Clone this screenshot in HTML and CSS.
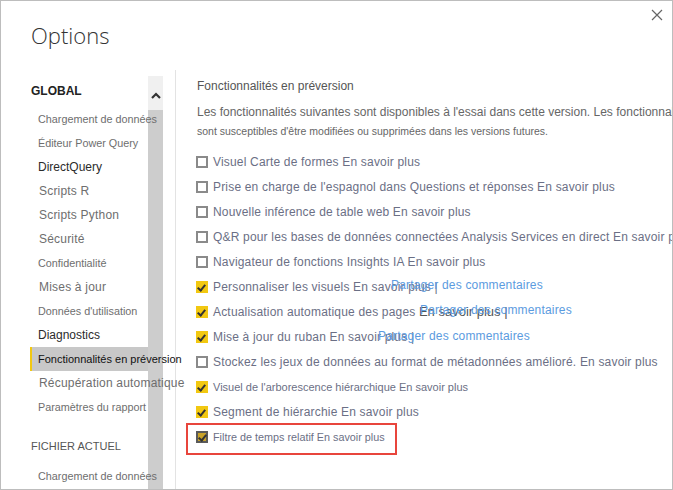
FILE: index.html
```html
<!DOCTYPE html>
<html lang="fr">
<head>
<meta charset="utf-8">
<title>Options</title>
<link rel="stylesheet" href="styles.css">
</head>
<body>
<div class="window">
  <button class="close" aria-label="Fermer">
    <svg width="12" height="12" viewBox="0 0 12 12"><path d="M1 1 L11 11 M11 1 L1 11" stroke="#666" stroke-width="1.2" fill="none"/></svg>
  </button>
  <h1 class="title">Options</h1>
  <div class="main">
    <nav class="nav">
      <div class="nav-list">
        <div class="nav-head">GLOBAL</div>
        <div class="nav-item s11">Chargement de données</div>
        <div class="nav-item s11">Éditeur Power Query</div>
        <div class="nav-item dark">DirectQuery</div>
        <div class="nav-item s12">Scripts R</div>
        <div class="nav-item s12">Scripts Python</div>
        <div class="nav-item s12">Sécurité</div>
        <div class="nav-item s11">Confidentialité</div>
        <div class="nav-item s12">Mises à jour</div>
        <div class="nav-item s11">Données d'utilisation</div>
        <div class="nav-item dark">Diagnostics</div>
        <div class="nav-item selected">Fonctionnalités en préversion</div>
        <div class="nav-item s12">Récupération automatique</div>
        <div class="nav-item s11">Paramètres du rapport</div>
        <div class="nav-head2">FICHIER ACTUEL</div>
        <div class="nav-item s11">Chargement de données</div>
      </div>
      <div class="scrollbar">
        <div class="scroll-up">
          <svg width="10" height="7" viewBox="0 0 10 7"><path d="M1 6 L5 2 L9 6" stroke="#333" stroke-width="2.2" fill="none"/></svg>
        </div>
        <div class="scroll-thumb"></div>
      </div>
    </nav>
    <section class="content">
      <h2 class="sec-title">Fonctionnalités en préversion</h2>
      <p class="desc1">Les fonctionnalités suivantes sont disponibles à l'essai dans cette version. Les fonctionnalités en préversion</p>
      <p class="desc2">sont susceptibles d'être modifiées ou supprimées dans les versions futures.</p>
      <ul class="opts">
        <li class="opt"><span class="cb"></span><span class="lbl">Visuel Carte de formes En savoir plus</span></li>
        <li class="opt"><span class="cb"></span><span class="lbl">Prise en charge de l'espagnol dans Questions et réponses En savoir plus</span></li>
        <li class="opt"><span class="cb"></span><span class="lbl">Nouvelle inférence de table web En savoir plus</span></li>
        <li class="opt"><span class="cb"></span><span class="lbl">Q&amp;R pour les bases de données connectées Analysis Services en direct En savoir plus</span></li>
        <li class="opt"><span class="cb"></span><span class="lbl">Navigateur de fonctions Insights IA En savoir plus</span></li>
        <li class="opt"><span class="cb on"></span><span class="lbl">Personnaliser les visuels En savoir plus |</span><span class="share s1">Partager des commentaires</span></li>
        <li class="opt"><span class="cb on"></span><span class="lbl">Actualisation automatique des pages <span class="big">En savoir plus |</span></span><span class="share s2">Partager des commentaires</span></li>
        <li class="opt"><span class="cb on"></span><span class="lbl">Mise à jour du ruban En savoir plus |</span><span class="share s3">Partager des commentaires</span></li>
        <li class="opt"><span class="cb"></span><span class="lbl">Stockez les jeux de données au format de métadonnées amélioré. En savoir plus</span></li>
        <li class="opt"><span class="cb on"></span><span class="lbl small">Visuel de l'arborescence hiérarchique En savoir plus</span></li>
        <li class="opt"><span class="cb on"></span><span class="lbl">Segment de hiérarchie En savoir plus</span></li>
        <li class="opt hl"><span class="cb on dim"></span><span class="lbl small tiny">Filtre de temps relatif En savoir plus</span></li>
      </ul>
    </section>
  </div>
</div>
</body>
</html>
```
FILE: styles.css
```css
* { box-sizing: border-box; }
html, body { margin: 0; padding: 0; background: #fff; }
body { font-family: "Liberation Sans", Arial, sans-serif; }

.window {
  position: relative;
  width: 673px;
  height: 490px;
  border: 1px solid #bdbdbd;
  background: #fff;
  overflow: hidden;
}

.close {
  position: absolute;
  top: 8px;
  right: 9px;
  width: 12px;
  height: 12px;
  padding: 0;
  border: 0;
  background: transparent;
  display: flex;
}

.title {
  margin: 0;
  padding: 18px 0 0 30px;
  height: 69px;
  font-family: "Open Sans", sans-serif;
  font-weight: 300;
  font-size: 22px;
  line-height: 32px;
  color: #333;
}

.main {
  display: flex;
  height: 420px;
}

.nav {
  display: flex;
  width: 175px;
  flex: none;
  border-right: 1px solid #e3e3e3;
  padding-left: 29px;
}

.nav-list {
  width: 118px;
  flex: none;
  padding-top: 9px;
  position: relative;
  z-index: 1;
}

.nav-head {
  height: 28px;
  line-height: 24px;
  font-weight: bold;
  font-size: 12px;
  color: #222;
  padding-left: 1px;
}

.nav-item {
  height: 24px;
  line-height: 24px;
  padding-left: 8px;
  white-space: nowrap;
  color: #6e6e6e;
  font-size: 10.8px;
}
.nav-item.s12 { font-size: 12px; padding-left: 9px; letter-spacing: 0.2px; }
.nav-item.dark { font-size: 12px; color: #2b2b2b; }
.nav-item.selected {
  background: #c8c8c8;
  border-left: 2px solid #f2c811;
  padding-left: 6px;
  color: #111;
  font-size: 11px;
}
.nav-head2 {
  height: 45px;
  padding-top: 19px;
  line-height: 16px;
  font-size: 11px;
  color: #555;
  padding-left: 1px;
}

.scrollbar {
  width: 15px;
  flex: none;
  margin-top: 6px;
  display: flex;
  flex-direction: column;
  background: #f0f0f0;
}
.scroll-up {
  height: 34px;
  display: flex;
  align-items: center;
  justify-content: center;
  padding-top: 4px;
}
.scroll-thumb {
  flex: 1;
  background: #cdcdcd;
}

.content {
  flex: 1;
  min-width: 0;
  padding-left: 20px;
  overflow: hidden;
  color: #6b6f85;
}
.sec-title {
  margin: 8px 0 0 1px;
  font-weight: normal;
  font-size: 12px;
  line-height: 16px;
  color: #555;
  white-space: nowrap;
}
.desc1 {
  margin: 10px 0 0 1px;
  font-size: 12px;
  line-height: 16px;
  color: #666;
  white-space: nowrap;
}
.desc2 {
  margin: 3px 0 0 1px;
  font-size: 10.5px;
  line-height: 16px;
  color: #666;
  white-space: nowrap;
}
.opts {
  list-style: none;
  margin: 10px 0 0;
  padding: 0;
}
.opt {
  position: relative;
  display: flex;
  align-items: center;
  height: 25px;
  white-space: nowrap;
  font-size: 12px;
}
.cb {
  width: 12px;
  height: 12px;
  flex: none;
  border: 2px solid #8a8a8a;
  background: #fff;
  margin-right: 5px;
  position: relative;
}
.cb.on {
  border: 0;
  background: #f2c811;
}
.cb.on::after {
  content: "";
  position: absolute;
  left: 3px;
  top: 2px;
  width: 3px;
  height: 6px;
  border: solid #333;
  border-width: 0 2px 2px 0;
  transform: rotate(40deg);
}
.cb.dim {
  border: 2px solid #5a5a5a;
  background: #c8a22a;
}
.cb.dim::after { left: 2px; top: 0px; }
.lbl { color: #6b6f85; letter-spacing: 0.18px; }
.lbl.small { font-size: 11px; letter-spacing: 0; }
.lbl.tiny { font-size: 10.8px; }
.big { font-size: 13px; color: #555; letter-spacing: 0; }
.share {
  position: absolute;
  top: 0;
  line-height: 25px;
  color: #5b9be0;
  font-size: 12px;
  letter-spacing: 0.18px;
}
.share.s1 { left: 195px; top: -1px; }
.share.s2 { left: 224px; top: -1px; }
.share.s3 { left: 182px; }
.opt.hl::before {
  content: "";
  position: absolute;
  left: -10px;
  top: -1px;
  width: 207px;
  height: 28px;
  border: 2px solid #e8453c;
}
```
